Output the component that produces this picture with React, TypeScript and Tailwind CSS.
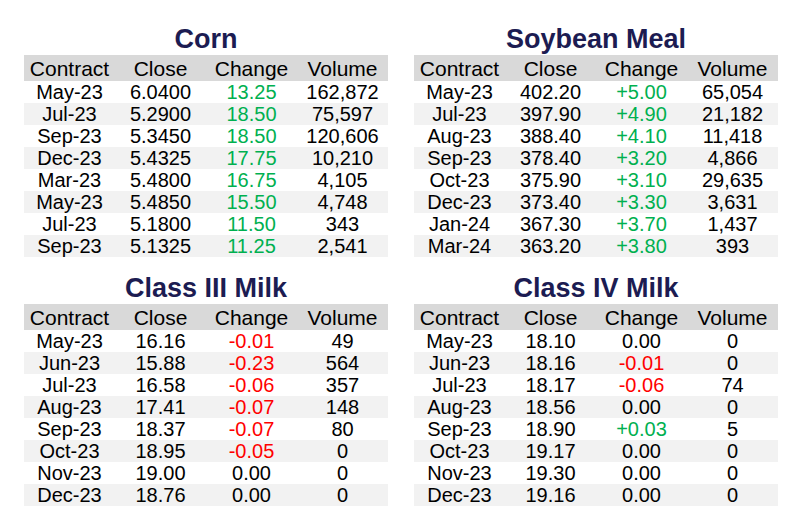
type Row = [string, string, string, string];

interface TableProps {
  title: string;
  rows: Row[];
}

const corn: Row[] = [
  ["May-23", "6.0400", "13.25", "162,872"],
  ["Jul-23", "5.2900", "18.50", "75,597"],
  ["Sep-23", "5.3450", "18.50", "120,606"],
  ["Dec-23", "5.4325", "17.75", "10,210"],
  ["Mar-23", "5.4800", "16.75", "4,105"],
  ["May-23", "5.4850", "15.50", "4,748"],
  ["Jul-23", "5.1800", "11.50", "343"],
  ["Sep-23", "5.1325", "11.25", "2,541"],
];

const soy: Row[] = [
  ["May-23", "402.20", "+5.00", "65,054"],
  ["Jul-23", "397.90", "+4.90", "21,182"],
  ["Aug-23", "388.40", "+4.10", "11,418"],
  ["Sep-23", "378.40", "+3.20", "4,866"],
  ["Oct-23", "375.90", "+3.10", "29,635"],
  ["Dec-23", "373.40", "+3.30", "3,631"],
  ["Jan-24", "367.30", "+3.70", "1,437"],
  ["Mar-24", "363.20", "+3.80", "393"],
];

const milk3: Row[] = [
  ["May-23", "16.16", "-0.01", "49"],
  ["Jun-23", "15.88", "-0.23", "564"],
  ["Jul-23", "16.58", "-0.06", "357"],
  ["Aug-23", "17.41", "-0.07", "148"],
  ["Sep-23", "18.37", "-0.07", "80"],
  ["Oct-23", "18.95", "-0.05", "0"],
  ["Nov-23", "19.00", "0.00", "0"],
  ["Dec-23", "18.76", "0.00", "0"],
];

const milk4: Row[] = [
  ["May-23", "18.10", "0.00", "0"],
  ["Jun-23", "18.16", "-0.01", "0"],
  ["Jul-23", "18.17", "-0.06", "74"],
  ["Aug-23", "18.56", "0.00", "0"],
  ["Sep-23", "18.90", "+0.03", "5"],
  ["Oct-23", "19.17", "0.00", "0"],
  ["Nov-23", "19.30", "0.00", "0"],
  ["Dec-23", "19.16", "0.00", "0"],
];

function changeColor(v: string) {
  if (v.startsWith("-")) return "text-[#ff0000]";
  if (v === "0.00") return "text-black";
  return "text-[#00b050]";
}

function PriceTable({ title, rows }: TableProps) {
  return (
    <section className="flex w-[364px] flex-col">
      <h2 className="h-8 text-center text-[27px] font-bold leading-8 text-[#1c1c52]">{title}</h2>
      <div className="grid h-[26px] grid-cols-4 items-center bg-[#d9d9d9] text-center text-[21px] leading-none">
        <span>Contract</span>
        <span>Close</span>
        <span>Change</span>
        <span>Volume</span>
      </div>
      {rows.map((r, i) => (
        <div
          key={i}
          className={`grid h-[22px] grid-cols-4 items-center text-center text-[20px] leading-none ${
            i % 2 === 1 ? "bg-[#f2f2f2]" : "bg-white"
          }`}
        >
          <span>{r[0]}</span>
          <span>{r[1]}</span>
          <span className={changeColor(r[2])}>{r[2]}</span>
          <span>{r[3]}</span>
        </div>
      ))}
    </section>
  );
}

export default function App() {
  return (
    <div className="h-[527px] w-[803px] bg-white pl-6 pt-[23px] font-['Liberation_Sans',Arial,sans-serif] text-black">
      <div className="grid w-[754px] grid-cols-[364px_364px] gap-x-[26px] gap-y-[15px]">
        <PriceTable title="Corn" rows={corn} />
        <PriceTable title="Soybean Meal" rows={soy} />
        <PriceTable title="Class III Milk" rows={milk3} />
        <PriceTable title="Class IV Milk" rows={milk4} />
      </div>
    </div>
  );
}
